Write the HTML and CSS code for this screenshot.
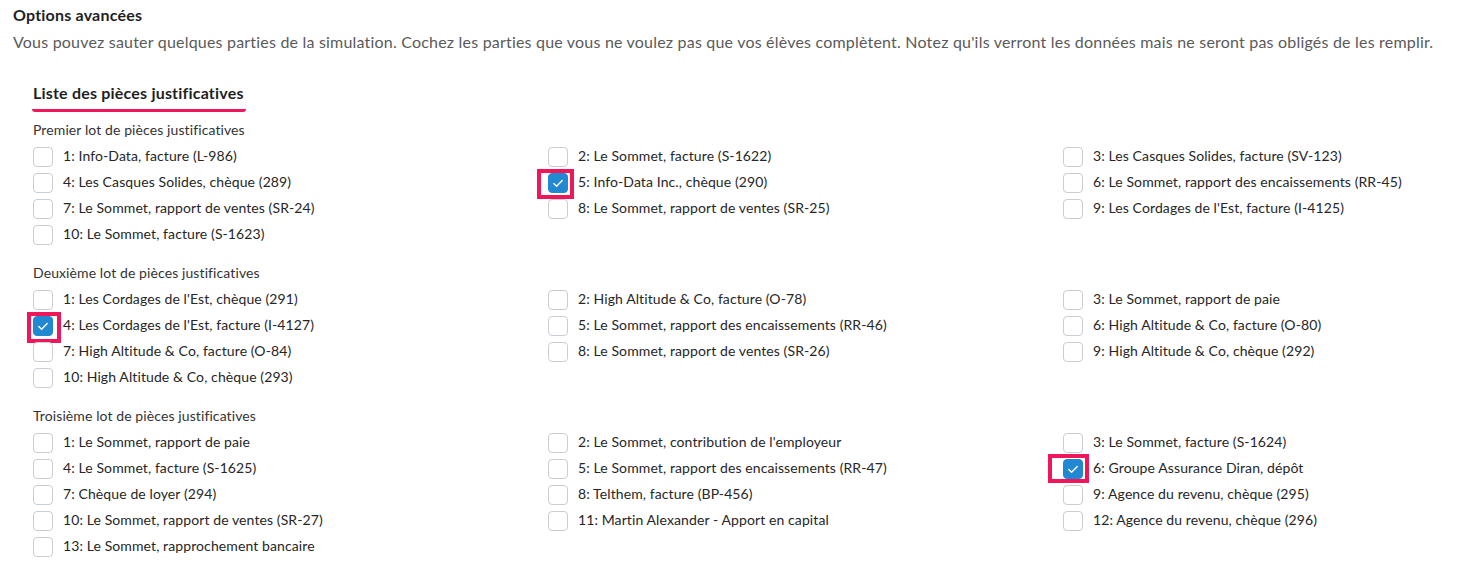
FILE: index.html
```html
<!DOCTYPE html>
<html lang="fr">
<head>
<meta charset="utf-8">
<link rel="stylesheet" href="styles.css">
</head>
<body>
<div class="page">
  <h2 class="title">Options avancées</h2>
  <p class="desc">Vous pouvez sauter quelques parties de la simulation. Cochez les parties que vous ne voulez pas que vos élèves complètent. Notez qu'ils verront les données mais ne seront pas obligés de les remplir.</p>

  <div class="section">
    <div class="tabs"><span class="tab">Liste des pièces justificatives</span></div>

    <div class="group">
      <div class="group-label">Premier lot de pièces justificatives</div>
      <div class="grid">
        <label class="item"><span class="box"></span><span class="text">1: Info-Data, facture (L-986)</span></label>
        <label class="item"><span class="box"></span><span class="text">2: Le Sommet, facture (S-1622)</span></label>
        <label class="item"><span class="box"></span><span class="text">3: Les Casques Solides, facture (SV-123)</span></label>
        <label class="item"><span class="box"></span><span class="text">4: Les Casques Solides, chèque (289)</span></label>
        <label class="item"><span class="box checked"><svg viewBox="0 0 20 20"><path d="M5.8 10.4l2.8 2.8 5.6-5.8" /></svg><span class="mark mark-a"></span></span><span class="text">5: Info-Data Inc., chèque (290)</span></label>
        <label class="item"><span class="box"></span><span class="text">6: Le Sommet, rapport des encaissements (RR-45)</span></label>
        <label class="item"><span class="box"></span><span class="text">7: Le Sommet, rapport de ventes (SR-24)</span></label>
        <label class="item"><span class="box"></span><span class="text">8: Le Sommet, rapport de ventes (SR-25)</span></label>
        <label class="item"><span class="box"></span><span class="text">9: Les Cordages de l'Est, facture (I-4125)</span></label>
        <label class="item"><span class="box"></span><span class="text">10: Le Sommet, facture (S-1623)</span></label>
      </div>
    </div>

    <div class="group">
      <div class="group-label">Deuxième lot de pièces justificatives</div>
      <div class="grid">
        <label class="item"><span class="box"></span><span class="text">1: Les Cordages de l'Est, chèque (291)</span></label>
        <label class="item"><span class="box"></span><span class="text">2: High Altitude &amp; Co, facture (O-78)</span></label>
        <label class="item"><span class="box"></span><span class="text">3: Le Sommet, rapport de paie</span></label>
        <label class="item"><span class="box checked"><svg viewBox="0 0 20 20"><path d="M5.8 10.4l2.8 2.8 5.6-5.8" /></svg><span class="mark mark-b"></span></span><span class="text">4: Les Cordages de l'Est, facture (I-4127)</span></label>
        <label class="item"><span class="box"></span><span class="text">5: Le Sommet, rapport des encaissements (RR-46)</span></label>
        <label class="item"><span class="box"></span><span class="text">6: High Altitude &amp; Co, facture (O-80)</span></label>
        <label class="item"><span class="box"></span><span class="text">7: High Altitude &amp; Co, facture (O-84)</span></label>
        <label class="item"><span class="box"></span><span class="text">8: Le Sommet, rapport de ventes (SR-26)</span></label>
        <label class="item"><span class="box"></span><span class="text">9: High Altitude &amp; Co, chèque (292)</span></label>
        <label class="item"><span class="box"></span><span class="text">10: High Altitude &amp; Co, chèque (293)</span></label>
      </div>
    </div>

    <div class="group">
      <div class="group-label">Troisième lot de pièces justificatives</div>
      <div class="grid">
        <label class="item"><span class="box"></span><span class="text">1: Le Sommet, rapport de paie</span></label>
        <label class="item"><span class="box"></span><span class="text">2: Le Sommet, contribution de l'employeur</span></label>
        <label class="item"><span class="box"></span><span class="text">3: Le Sommet, facture (S-1624)</span></label>
        <label class="item"><span class="box"></span><span class="text">4: Le Sommet, facture (S-1625)</span></label>
        <label class="item"><span class="box"></span><span class="text">5: Le Sommet, rapport des encaissements (RR-47)</span></label>
        <label class="item"><span class="box checked"><svg viewBox="0 0 20 20"><path d="M5.8 10.4l2.8 2.8 5.6-5.8" /></svg><span class="mark mark-c"></span></span><span class="text">6: Groupe Assurance Diran, dépôt</span></label>
        <label class="item"><span class="box"></span><span class="text">7: Chèque de loyer (294)</span></label>
        <label class="item"><span class="box"></span><span class="text">8: Telthem, facture (BP-456)</span></label>
        <label class="item"><span class="box"></span><span class="text">9: Agence du revenu, chèque (295)</span></label>
        <label class="item"><span class="box"></span><span class="text">10: Le Sommet, rapport de ventes (SR-27)</span></label>
        <label class="item"><span class="box"></span><span class="text">11: Martin Alexander - Apport en capital</span></label>
        <label class="item"><span class="box"></span><span class="text">12: Agence du revenu, chèque (296)</span></label>
        <label class="item"><span class="box"></span><span class="text">13: Le Sommet, rapprochement bancaire</span></label>
      </div>
    </div>
  </div>
</div>
</body>
</html>
```

FILE: styles.css
```css
* { box-sizing: border-box; }
html, body { margin: 0; padding: 0; background: #fff; }
body {
  font-family: "Lato", "Noto Sans", sans-serif;
  color: #262626;
}
.page {
  padding: 6px 13px 0 13px;
}
.title {
  margin: 0;
  font-size: 16px;
  font-weight: 700;
  letter-spacing: 0.2px;
  line-height: 18px;
  color: #1f1f1f;
}
.desc {
  margin: 8px 0 0 0;
  font-size: 16px;
  letter-spacing: 0.2px;
  line-height: 20px;
  color: #5a5a5a;
}
.section {
  padding-left: 20px;
  margin-top: 31px;
}
.tabs {
  display: flex;
}
.tab {
  display: inline-block;
  font-size: 16px;
  font-weight: 700;
  letter-spacing: 0.2px;
  line-height: 20px;
  color: #1f1f1f;
  padding: 0 2px 6px 1px;
  margin-left: -1px;
  border-bottom: 3px solid #f0175b;
  border-radius: 0 0 3px 3px;
}
.group {
  margin-top: 8px;
}
.group + .group {
  margin-top: 18px;
}
.group-label {
  font-size: 14px;
  letter-spacing: 0.1px;
  line-height: 20px;
  color: #333;
}
.grid {
  margin-top: 7px;
  display: grid;
  grid-template-columns: 515px 515px 1fr;
  row-gap: 6px;
}
.item {
  display: flex;
  align-items: flex-start;
  gap: 10px;
  height: 20px;
  font-size: 14px;
  letter-spacing: 0.1px;
  color: #262626;
}
.text {
  line-height: 17px;
}
.box {
  position: relative;
  flex: none;
  width: 20px;
  height: 20px;
  border: 1px solid #c9ced4;
  border-radius: 4px;
  background: #fff;
}
.box.checked {
  background: #2188d1;
  border-color: #2188d1;
}
.box svg {
  position: absolute;
  left: -1px;
  top: -1px;
  width: 20px;
  height: 20px;
}
.box svg path {
  fill: none;
  stroke: #fff;
  stroke-width: 1.4;
  stroke-linecap: round;
  stroke-linejoin: round;
}
.mark {
  position: absolute;
  border: 4px solid #ef1659;
}
.mark-a { left: -12px; top: -5px; width: 37px; height: 30px; }
.mark-b { left: -7px; top: -5px; width: 34px; height: 31px; }
.mark-c { left: -16px; top: -6px; width: 41px; height: 29px; }
```
